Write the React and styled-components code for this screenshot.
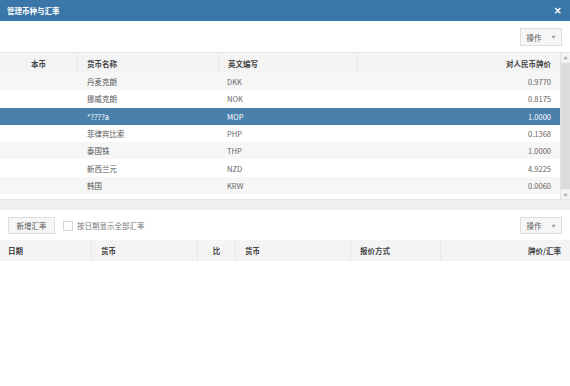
import React from 'react';
import styled, { createGlobalStyle } from 'styled-components';

const Global = createGlobalStyle`
body {
  margin: 0;
  background: #fff;
  font-family: "Noto Sans CJK SC", "Noto Sans", sans-serif;
  font-size: 7.5px;
  color: #555;
}
`

const Dialog = styled.div`
width: 570px;
height: 386px;
display: flex;
flex-direction: column;
background: #fff;
overflow: hidden;
`
const TitleBar = styled.div`
height: 21px;
flex: none;
display: flex;
align-items: center;
justify-content: space-between;
padding: 0 8px 0 7px;
background: #3a77a8;
color: #fff;
font-weight: bold;
font-size: 7.5px;
`
const Close = styled.span`
font-size: 10px;
font-weight: bold;
line-height: 1;
font-family: "DejaVu Sans", sans-serif;
`
const Toolbar = styled.div`
height: ${p => p.h || 31}px;
flex: none;
box-sizing: border-box;
display: flex;
justify-content: ${p => (p.split ? 'space-between' : 'flex-end')};
align-items: flex-start;
padding: 7px 8px 0;
`
const Button = styled.button`
height: ${p => p.h || 18}px;
width: ${p => p.w}px;
box-sizing: border-box;
display: flex;
align-items: center;
justify-content: center;
gap: 10px;
padding: 0;
border: 1px solid #dedede;
background: #f6f6f6;
color: #555;
font-family: inherit;
font-size: 7.5px;
`
const Caret = styled.span`
font-size: 4px;
color: #a0a0a0;
`
const Grid = styled.div`
height: 147px;
flex: none;
display: flex;
border-top: 1px solid #e6e6e6;
box-sizing: border-box;
`
const TableArea = styled.div`
flex: 1;
display: flex;
flex-direction: column;
`
const Row = styled.div`
display: grid;
grid-template-columns: ${p => p.cols};
height: ${p => p.h}px;
align-items: center;
background: ${p => (p.selected ? '#4a80ac' : p.odd ? '#f6f6f6' : '#fff')};
color: ${p => (p.selected ? '#fff' : 'inherit')};
`
const HeadRow = styled(Row)`
background: #f4f4f4;
color: #444;
font-weight: bold;
height: ${p => p.h}px;
align-items: stretch;
`
const HeadCell = styled.div`
display: flex;
align-items: center;
justify-content: ${p => p.align || 'flex-start'};
padding: 0 9px;
border-left: ${p => (p.first ? 'none' : '1px solid #e8e8e8')};
`
const Cell = styled.div`
padding: 0 9px 0 ${p => p.pl || 9}px;
text-align: ${p => p.align || 'left'};
color: ${p => (p.selected ? '#fff' : p.tone || '#555')};
white-space: nowrap;
`
const VScroll = styled.div`
width: 9px;
flex: none;
display: flex;
flex-direction: column;
background: #f0f0f0;
border-left: 1px solid #e2e2e2;
`
const Arrow = styled.div`
height: 9px;
display: flex;
align-items: center;
justify-content: center;
font-size: 4px;
color: #aaa;
background: #f4f4f4;
`
const Thumb = styled.div`
flex: 1;
margin: 1px 0;
background: #dcdcdc;
`
const HScroll = styled.div`
height: 11px;
flex: none;
background: #efefef;
border-top: 1px solid #e6e6e6;
box-sizing: border-box;
`
const Left = styled.div`
display: flex;
align-items: center;
gap: 8px;
`
const Check = styled.label`
display: flex;
align-items: center;
gap: 4px;
color: #777;
`
const Box = styled.span`
width: 10px;
height: 10px;
box-sizing: border-box;
border: 1px solid #d6d6d6;
background: #fff;
`

const topCols = '77px 141px 139px 1fr'
const bottomCols = '91px 106px 38px 115px 90px 1fr'

const rates = [
  ['丹麦克朗', 'DKK', '0.9770'],
  ['挪威克朗', 'NOK', '0.8175'],
  ['*????a', 'MOP', '1.0000'],
  ['菲律宾比索', 'PHP', '0.1368'],
  ['泰国铢', 'THP', '1.0000'],
  ['新西兰元', 'NZD', '4.9225'],
  ['韩国', 'KRW', '0.0060'],
]

export default function App() {
  return (
    <Dialog>
      <Global />
      <TitleBar>
        <span>管理币种与汇率</span>
        <Close>×</Close>
      </TitleBar>
      <Toolbar>
        <Button w={42}>操作<Caret>▼</Caret></Button>
      </Toolbar>
      <Grid>
        <TableArea>
          <HeadRow cols={topCols} h={20}>
            <HeadCell first align="center">本币</HeadCell>
            <HeadCell>货币名称</HeadCell>
            <HeadCell>英文编写</HeadCell>
            <HeadCell align="flex-end">对人民币牌价</HeadCell>
          </HeadRow>
          {rates.map(([name, code, val], i) => {
            const selected = i === 2
            return (
              <Row key={code} cols={topCols} h={17.3} odd={i % 2 === 0} selected={selected}>
                <Cell selected={selected} />
                <Cell selected={selected} pl={10}>{name}</Cell>
                <Cell selected={selected} tone="#666">{code}</Cell>
                <Cell selected={selected} align="right" tone="#6a625a">{val}</Cell>
              </Row>
            )
          })}
        </TableArea>
        <VScroll>
          <Arrow>▲</Arrow>
          <Thumb />
          <Arrow>▼</Arrow>
        </VScroll>
      </Grid>
      <HScroll />
      <Toolbar split h={30}>
        <Left>
          <Button w={47} h={17}>新增汇率</Button>
          <Check><Box />按日期显示全部汇率</Check>
        </Left>
        <Button w={42} h={17}>操作<Caret>▼</Caret></Button>
      </Toolbar>
      <HeadRow cols={bottomCols} h={21}>
        <HeadCell first style={{ paddingLeft: 8 }}>日期</HeadCell>
        <HeadCell>货币</HeadCell>
        <HeadCell align="center">比</HeadCell>
        <HeadCell>货币</HeadCell>
        <HeadCell>报价方式</HeadCell>
        <HeadCell align="flex-end">牌价/汇率</HeadCell>
      </HeadRow>
    </Dialog>
  )
}
